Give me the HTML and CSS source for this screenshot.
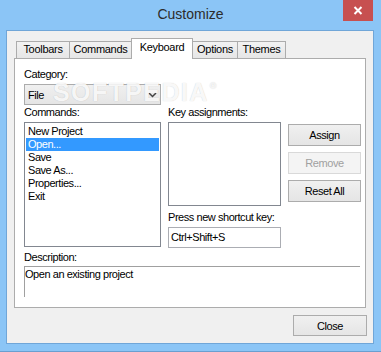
FILE: index.html
```html
<!DOCTYPE html>
<html lang="en">
<head>
  <meta charset="UTF-8" />
  <title>Customize</title>
  <link rel="stylesheet" href="styles.css">
</head>
<body>

<div class="window">
  <div class="titlebar">
    <span></span>
    <div class="title">Customize</div>
    <div class="close-x">
      <svg width="10" height="9" viewBox="0 0 10 9">
        <path d="M1.5 1 L8.5 8 M8.5 1 L1.5 8" stroke="#fff" stroke-width="2" fill="none" />
      </svg>
    </div>
  </div>

  <div class="client">
    <div class="tabs">
      <div class="tab tab-toolbars">Toolbars</div>
      <div class="tab tab-commands">Commands</div>
      <div class="tab tab-keyboard active">Keyboard</div>
      <div class="tab tab-options">Options</div>
      <div class="tab tab-themes">Themes</div>
    </div>

    <div class="panel">
      <div class="watermark">SOFTPEDIA<span class="reg">®</span></div>

      <div class="label">Category:</div>
      <div class="combo">
        <span>File</span>
        <svg width="9" height="6" viewBox="0 0 9 6">
          <path d="M1 1 L4.5 4.5 L8 1" stroke="#444" stroke-width="1.5" fill="none" />
        </svg>
      </div>

      <div class="main">
        <div class="col">
          <div class="label">Commands:</div>
          <ul class="listbox commands">
            <li>New Project</li>
            <li class="selected">Open...</li>
            <li>Save</li>
            <li>Save As...</li>
            <li>Properties...</li>
            <li>Exit</li>
          </ul>
        </div>
        <div class="col">
          <div class="label">Key assignments:</div>
          <div class="listbox keys"></div>
          <div class="label shortcut-label">Press new shortcut key:</div>
          <div class="textbox">Ctrl+Shift+S</div>
        </div>
        <div class="col buttons">
          <button class="btn">Assign</button>
          <button class="btn" disabled>Remove</button>
          <button class="btn">Reset All</button>
        </div>
      </div>

      <div class="label desc-label">Description:</div>
      <div class="desc">Open an existing project</div>
    </div>

    <div class="footer">
      <button class="btn close-btn">Close</button>
    </div>
  </div>
</div>

</body>
</html>
```

FILE: styles.css
```css
body {
  margin: 0;
  font-family: "Liberation Sans", Arial, sans-serif;
  font-size: 11px;
  color: #000;
}
.window {
  width: 381px;
  height: 352px;
  box-sizing: border-box;
  background: #8bc5f6;
  border-bottom: 1px solid #6a9fd0;
}
.titlebar {
  display: grid;
  grid-template-columns: 1fr auto 1fr;
  height: 30px;
}
.title {
  margin-top: 6px;
  font-size: 14px;
  line-height: 16px;
  color: #2b2b2b;
}
.close-x {
  justify-self: end;
  margin-right: 8px;
  width: 30px;
  height: 21px;
  background: #c75050;
  display: flex;
  align-items: center;
  justify-content: center;
}
.client {
  margin-left: 6px;
  width: 368px;
  height: 314px;
  box-sizing: border-box;
  border: 1px solid #70a6d8;
  background: #f0f0f0;
  padding: 7px 7px 0 7px;
  letter-spacing: -0.45px;
}
.tabs {
  display: flex;
  align-items: flex-end;
  height: 20px;
  margin-left: 2px;
}
.tab {
  box-sizing: border-box;
  height: 17px;
  line-height: 15px;
  text-align: center;
  border: 1px solid #acacac;
  border-bottom: none;
  background: linear-gradient(#f2f2f2, #e6e6e6);
  margin-left: -1px;
  letter-spacing: -0.3px;
}
.tab-toolbars { width: 54px; margin-left: 0; }
.tab-commands { width: 63px; }
.tab-keyboard { width: 62px; }
.tab-options { width: 46px; }
.tab-themes { width: 49px; }
.tab.active {
  height: 21px;
  line-height: 16px;
  margin-bottom: -1px;
  background: #fff;
  position: relative;
  z-index: 1;
}
.panel {
  position: relative;
  box-sizing: border-box;
  width: 352px;
  height: 250px;
  border: 1px solid #acacac;
  background: #fff;
  padding: 9px 0 0 9px;
}
.watermark {
  position: absolute;
  left: 38px;
  top: 23px;
  font-size: 25px;
  line-height: 20px;
  font-weight: bold;
  letter-spacing: 1.4px;
  color: rgba(255, 255, 255, 0.9);
  text-shadow: 0 0 1px rgba(0, 0, 0, 0.22);
  pointer-events: none;
  z-index: 2;
}
.watermark .reg {
  font-size: 9px;
  line-height: 9px;
  vertical-align: top;
  margin-left: 1px;
}
.label {
  height: 13px;
  line-height: 13px;
  white-space: nowrap;
}
.combo {
  box-sizing: border-box;
  margin-top: 3px;
  width: 137px;
  height: 21px;
  border: 1px solid #acacac;
  background: linear-gradient(#f0f0f0, #e5e5e5);
  display: flex;
  align-items: center;
  justify-content: space-between;
  padding: 0 3px 0 3px;
}
.main {
  display: grid;
  grid-template-columns: 137px 113px 73px;
  gap: 7px;
  margin-top: 1px;
}
.col {
  display: flex;
  flex-direction: column;
}
.listbox {
  box-sizing: border-box;
  margin: 3px 0 0;
  border: 1px solid #828790;
  background: #fff;
  list-style: none;
  padding: 1px 1px 0;
}
.commands { height: 125px; }
.keys { height: 84px; }
.listbox li {
  height: 13px;
  line-height: 13px;
  padding-left: 2px;
}
.listbox li:first-child { margin-top: 1px; }
.listbox li.selected {
  background: #3399ff;
  color: #fff;
}
.shortcut-label { margin-top: 5px; }
.textbox {
  box-sizing: border-box;
  margin-top: 3px;
  height: 21px;
  border: 1px solid #abadb3;
  line-height: 19px;
  padding-left: 2px;
}
.buttons {
  padding-top: 18px;
  gap: 6px;
}
.btn {
  box-sizing: border-box;
  height: 22px;
  border: 1px solid #acacac;
  background: linear-gradient(#f0f0f0, #e5e5e5);
  font-family: inherit;
  font-size: 11px;
  letter-spacing: -0.45px;
  color: #000;
  padding: 0;
}
.btn:disabled {
  border-color: #d9d9d9;
  background: #f4f4f4;
  color: #a0a0a0;
}
.desc-label { margin-top: 3px; }
.desc {
  box-sizing: border-box;
  margin-top: 2px;
  width: 336px;
  height: 31px;
  border-top: 1px solid #a0a0a0;
  border-left: 1px solid #a0a0a0;
  line-height: 13px;
  padding: 1px 0 0 0;
}
.footer {
  display: flex;
  justify-content: flex-end;
  padding-top: 7px;
}
.close-btn {
  width: 74px;
  height: 21px;
  margin-right: -1px;
}
```
